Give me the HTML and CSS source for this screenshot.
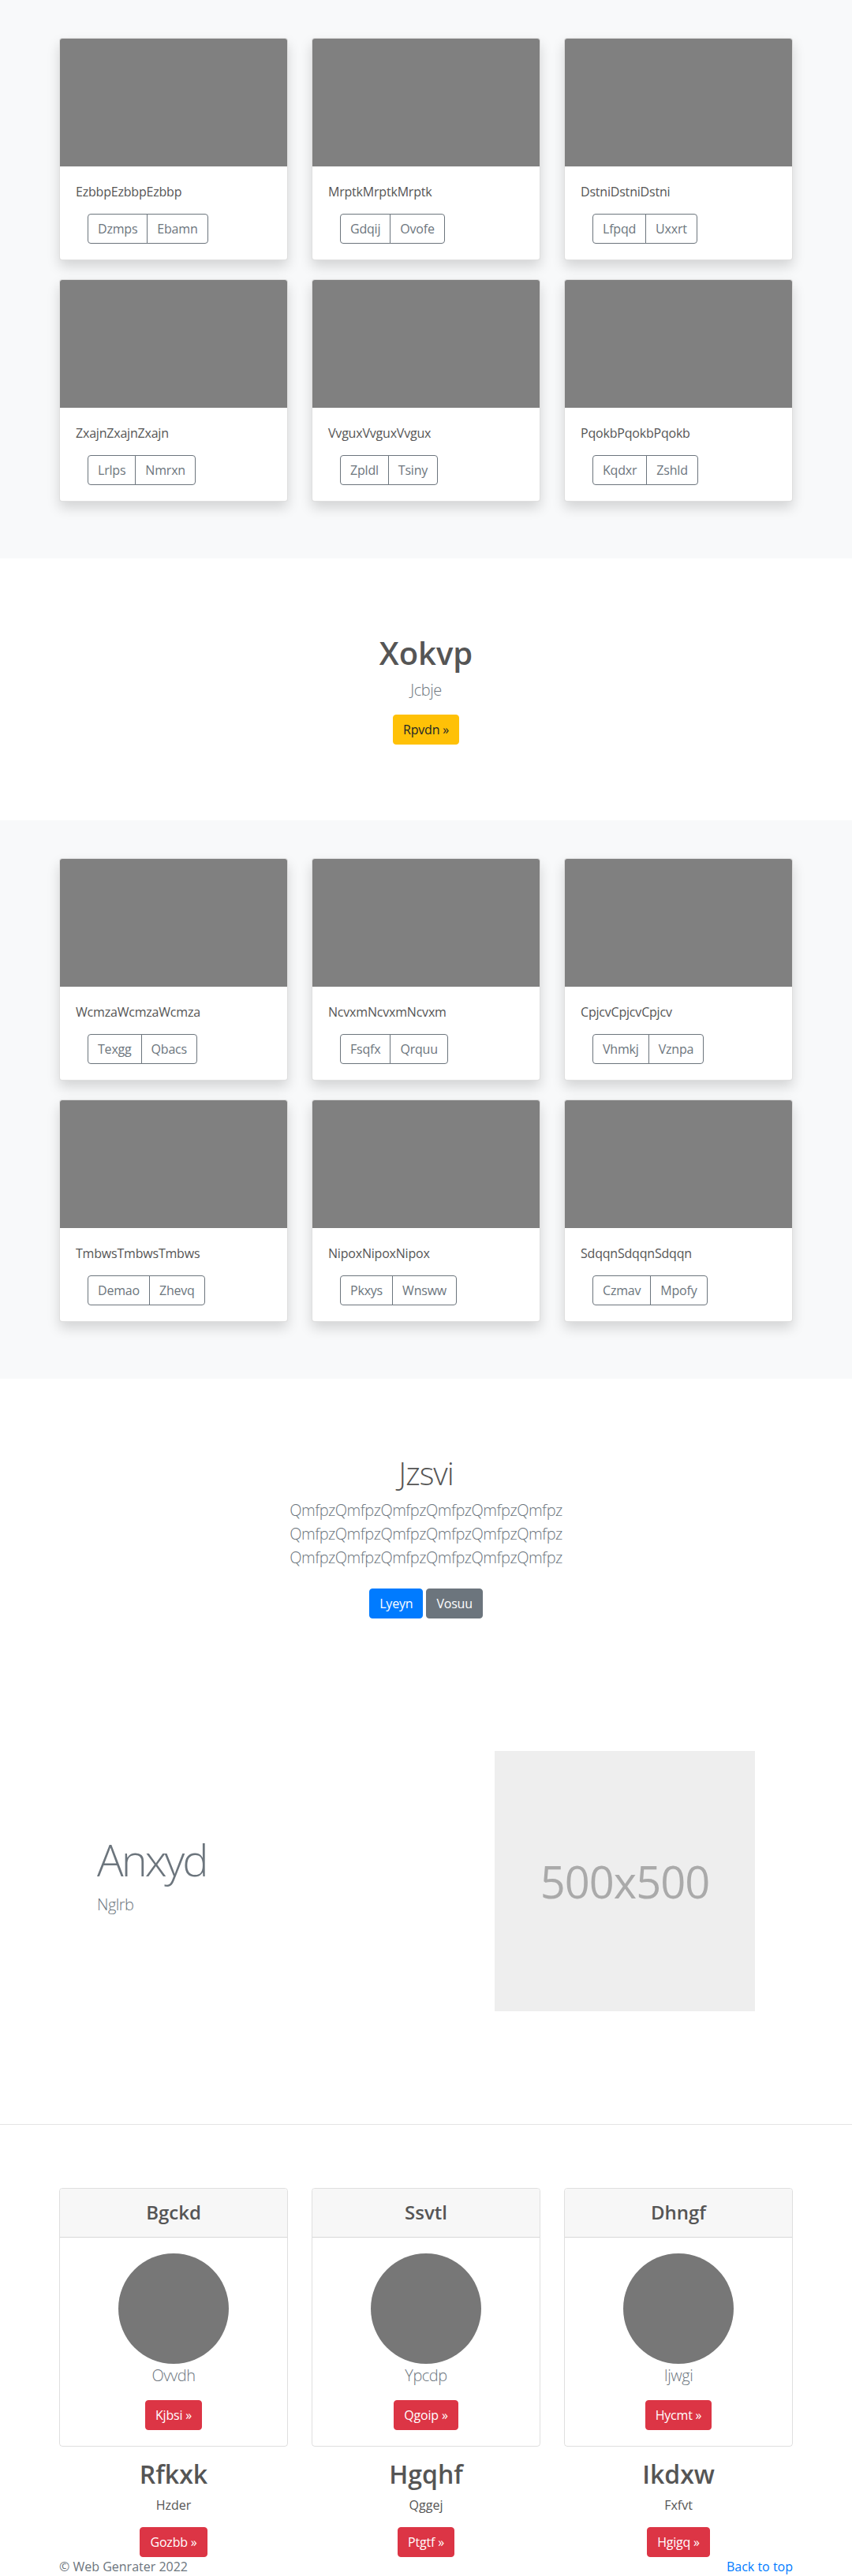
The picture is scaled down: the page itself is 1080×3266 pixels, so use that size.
FILE: index.html
```html
<!DOCTYPE html>
<html lang="en">
<head>
<meta charset="utf-8">
<title>Album</title>
<link rel="stylesheet" href="styles.css">
</head>
<body>
<main>
  <section class="album">
    <div class="container">
      <div class="card-grid">
        <div class="card"><div class="card-img"></div><div class="card-body"><p class="card-text">EzbbpEzbbpEzbbp</p><div class="btn-group"><a class="btn btn-outline">Dzmps</a><a class="btn btn-outline">Ebamn</a></div></div></div>
        <div class="card"><div class="card-img"></div><div class="card-body"><p class="card-text">MrptkMrptkMrptk</p><div class="btn-group"><a class="btn btn-outline">Gdqij</a><a class="btn btn-outline">Ovofe</a></div></div></div>
        <div class="card"><div class="card-img"></div><div class="card-body"><p class="card-text">DstniDstniDstni</p><div class="btn-group"><a class="btn btn-outline">Lfpqd</a><a class="btn btn-outline">Uxxrt</a></div></div></div>
        <div class="card"><div class="card-img"></div><div class="card-body"><p class="card-text">ZxajnZxajnZxajn</p><div class="btn-group"><a class="btn btn-outline">Lrlps</a><a class="btn btn-outline">Nmrxn</a></div></div></div>
        <div class="card"><div class="card-img"></div><div class="card-body"><p class="card-text">VvguxVvguxVvgux</p><div class="btn-group"><a class="btn btn-outline">Zpldl</a><a class="btn btn-outline">Tsiny</a></div></div></div>
        <div class="card"><div class="card-img"></div><div class="card-body"><p class="card-text">PqokbPqokbPqokb</p><div class="btn-group"><a class="btn btn-outline">Kqdxr</a><a class="btn btn-outline">Zshld</a></div></div></div>
      </div>
    </div>
  </section>

  <section class="hero">
    <h1 class="hero-title">Xokvp</h1>
    <p class="lead muted">Jcbje</p>
    <div class="btn-row"><a class="btn btn-warning">Rpvdn &raquo;</a></div>
  </section>

  <section class="album">
    <div class="container">
      <div class="card-grid">
        <div class="card"><div class="card-img"></div><div class="card-body"><p class="card-text">WcmzaWcmzaWcmza</p><div class="btn-group"><a class="btn btn-outline">Texgg</a><a class="btn btn-outline">Qbacs</a></div></div></div>
        <div class="card"><div class="card-img"></div><div class="card-body"><p class="card-text">NcvxmNcvxmNcvxm</p><div class="btn-group"><a class="btn btn-outline">Fsqfx</a><a class="btn btn-outline">Qrquu</a></div></div></div>
        <div class="card"><div class="card-img"></div><div class="card-body"><p class="card-text">CpjcvCpjcvCpjcv</p><div class="btn-group"><a class="btn btn-outline">Vhmkj</a><a class="btn btn-outline">Vznpa</a></div></div></div>
        <div class="card"><div class="card-img"></div><div class="card-body"><p class="card-text">TmbwsTmbwsTmbws</p><div class="btn-group"><a class="btn btn-outline">Demao</a><a class="btn btn-outline">Zhevq</a></div></div></div>
        <div class="card"><div class="card-img"></div><div class="card-body"><p class="card-text">NipoxNipoxNipox</p><div class="btn-group"><a class="btn btn-outline">Pkxys</a><a class="btn btn-outline">Wnsww</a></div></div></div>
        <div class="card"><div class="card-img"></div><div class="card-body"><p class="card-text">SdqqnSdqqnSdqqn</p><div class="btn-group"><a class="btn btn-outline">Czmav</a><a class="btn btn-outline">Mpofy</a></div></div></div>
      </div>
    </div>
  </section>

  <section class="jumbo">
    <div class="jumbo-inner">
      <h1 class="jumbo-title">Jzsvi</h1>
      <p class="lead muted">QmfpzQmfpzQmfpzQmfpzQmfpzQmfpz QmfpzQmfpzQmfpzQmfpzQmfpzQmfpz QmfpzQmfpzQmfpzQmfpzQmfpzQmfpz</p>
      <div class="btn-row jumbo-btns"><a class="btn btn-primary">Lyeyn</a><a class="btn btn-secondary">Vosuu</a></div>
    </div>
  </section>

  <section class="feature">
    <div class="container feature-row">
      <div class="feature-text">
        <h1 class="display">Anxyd</h1>
        <p class="lead muted">Nglrb</p>
      </div>
      <div class="feature-media">
        <div class="placeholder">500x500</div>
      </div>
    </div>
  </section>

  <hr class="divider">

  <section class="pricing">
    <div class="container">
      <div class="price-grid">
        <div class="pcard"><div class="pcard-header"><h4>Bgckd</h4></div><div class="pcard-body"><div class="circle"></div><p class="lead muted">Ovvdh</p><a class="btn btn-danger">Kjbsi &raquo;</a></div></div>
        <div class="pcard"><div class="pcard-header"><h4>Ssvtl</h4></div><div class="pcard-body"><div class="circle"></div><p class="lead muted">Ypcdp</p><a class="btn btn-danger">Qgoip &raquo;</a></div></div>
        <div class="pcard"><div class="pcard-header"><h4>Dhngf</h4></div><div class="pcard-body"><div class="circle"></div><p class="lead muted">Ijwgi</p><a class="btn btn-danger">Hycmt &raquo;</a></div></div>
      </div>
      <div class="cols">
        <div class="col"><h2>Rfkxk</h2><p>Hzder</p><a class="btn btn-danger">Gozbb &raquo;</a></div>
        <div class="col"><h2>Hgqhf</h2><p>Qggej</p><a class="btn btn-danger">Ptgtf &raquo;</a></div>
        <div class="col"><h2>Ikdxw</h2><p>Fxfvt</p><a class="btn btn-danger">Hgigq &raquo;</a></div>
      </div>
    </div>
  </section>
</main>
<footer class="container footer">
  <p class="copy">&copy; Web Genrater 2022</p>
  <a class="top-link">Back to top</a>
</footer>
</body>
</html>
```
FILE: styles.css
```css
* { box-sizing: border-box; }
html, body { margin: 0; padding: 0; }
body {
  width: 1080px;
  font-family: "Open Sans", "Noto Sans", sans-serif;
  font-size: 16px;
  line-height: 1.5;
  color: #555;
  background: #fff;
}
p, h1, h2, h4 { margin: 0; }
a { text-decoration: none; }

.container { width: 960px; margin: 0 auto; padding: 0 15px; }

/* album sections */
.album { background: #f8f9fa; padding: 48px 0 72px; }
.card-grid {
  display: grid;
  grid-template-columns: repeat(3, 290px);
  column-gap: 30px;
  row-gap: 24px;
}
.card {
  background: #fff;
  border: 1px solid rgba(0,0,0,.125);
  border-radius: 4px;
  box-shadow: 0 8px 16px rgba(0,0,0,.15);
  overflow: hidden;
}
.card-img { height: 162px; background: #808080; }
.card-body { padding: 20px; }
.card-text { margin-bottom: 16px; color: #555; letter-spacing: -0.2px; }
.btn-group { display: inline-flex; margin-left: 15px; }

.btn {
  display: inline-block;
  font-size: 16px;
  line-height: 24px;
  padding: 6px 12px;
  border: 1px solid transparent;
  border-radius: 4px;
  cursor: pointer;
  white-space: nowrap;
  letter-spacing: -0.2px;
}
.btn-outline { color: #6c757d; border-color: #6c757d; background: transparent; }
.btn-group .btn:first-child { border-top-right-radius: 0; border-bottom-right-radius: 0; }
.btn-group .btn:last-child { border-top-left-radius: 0; border-bottom-left-radius: 0; margin-left: -1px; }
.btn-warning { background: #ffc107; border-color: #ffc107; color: #212529; }
.btn-primary { background: #007bff; border-color: #007bff; color: #fff; }
.btn-secondary { background: #6c757d; border-color: #6c757d; color: #fff; }
.btn-danger { background: #dc3545; border-color: #dc3545; color: #fff; }

.lead { font-size: 20px; font-weight: 300; line-height: 30px; letter-spacing: -0.5px; }
.muted { color: #6c757d; }

/* hero */
.hero { text-align: center; padding: 96px 0; }
.hero-title { font-size: 40px; line-height: 48px; font-weight: 600; color: #555; margin-bottom: 8px; }
.hero .lead { margin-bottom: 16px; }
.btn-row { display: flex; justify-content: center; gap: 4px; }

/* jumbotron */
.jumbo { text-align: center; padding: 96px 0; }
.jumbo-inner { width: 450px; margin: 0 auto; }
.jumbo-title { font-size: 40px; line-height: 48px; font-weight: 300; color: #555; margin-bottom: 8px; letter-spacing: -1px; }
.jumbo .lead { margin-bottom: 16px; }
.jumbo-btns { padding: 8px 0; margin-bottom: 16px; }

/* feature */
.feature-row { display: flex; align-items: center; }
.feature-text { flex: 0 0 465px; padding: 48px 63px 48px 48px; margin-bottom: 95px; }
.feature-media { flex: 0 0 465px; padding: 48px 48px 143px 63px; display: flex; justify-content: flex-end; }
.display { font-size: 56px; line-height: 1.2; font-weight: 300; color: #6c757d; margin-bottom: 8px; letter-spacing: -3px; }
.feature-text .lead { margin-bottom: 16px; }
.placeholder {
  width: 330px; height: 330px;
  background: #eeeeee;
  color: #aaaaaa;
  font-size: 56px;
  letter-spacing: -1px;
  display: flex; align-items: center; justify-content: center;
}

.divider { margin: 0; border: 0; border-top: 1px solid #e5e5e5; }

/* pricing */
.pricing { padding-top: 80px; }
.price-grid { display: grid; grid-template-columns: repeat(3, 290px); column-gap: 30px; }
.pcard { border: 1px solid rgba(0,0,0,.125); border-radius: 4px; text-align: center; }
.pcard-header { background: #f7f7f7; border-bottom: 1px solid rgba(0,0,0,.125); padding: 16px 20px; border-radius: 3px 3px 0 0; }
.pcard-header h4 { font-size: 24px; line-height: 28.8px; font-weight: 600; color: #555; }
.pcard-body { padding: 20px; }
.circle { width: 140px; height: 140px; border-radius: 50%; background: #777; margin: 0 auto; }
.pcard-body .lead { margin-bottom: 16px; }

.cols { display: grid; grid-template-columns: repeat(3, 290px); column-gap: 30px; margin-top: 16px; text-align: center; }
.col h2 { font-size: 32px; line-height: 38.4px; font-weight: 600; color: #555; margin-bottom: 8px; }
.col p { margin-bottom: 16px; color: #555; }

/* footer */
.footer { display: flex; justify-content: space-between; line-height: 24px; }
.copy { color: #6c757d; }
.top-link { color: #007bff; }
```
